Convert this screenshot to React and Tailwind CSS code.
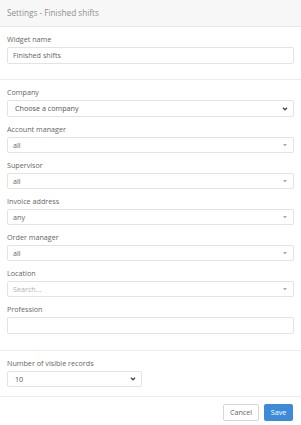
import React from "react";

const Chevron = () => (
  <svg width="6" height="4" viewBox="0 0 6 4" className="shrink-0">
    <path d="M1 0.8l2 2 2-2" fill="none" stroke="#444" strokeWidth="1.3" />
  </svg>
);

const Caret = () => (
  <svg width="4" height="3" viewBox="0 0 4 3" className="shrink-0">
    <path d="M0 0h4L2 2.5z" fill="#aaa" />
  </svg>
);

const Field = ({ label, children }) => (
  <div className="mb-[7px]">
    <div className="h-[13px] leading-[11px] text-[#666]">{label}</div>
    {children}
  </div>
);

const Dropdown = ({ value, muted }) => (
  <div className="h-[16px] border border-[#e3e3e3] rounded-[2px] bg-white flex items-center justify-between pl-[5px] pr-[6px]">
    <span className={muted ? "text-[#b0b0b0]" : "text-[#666]"}>{value}</span>
    <Caret />
  </div>
);

const App = () => {
  return (
    <div
      className="w-[301px] h-[425px] bg-white text-[7.2px] overflow-hidden"
      style={{ fontFamily: '"Open Sans", sans-serif' }}
    >
      <div className="h-[27px] bg-[#f7f7f7] border-b border-[#e8e8e8] flex items-center px-[7px] text-[8.2px] text-[#8f8f8f]">
        Settings - Finished shifts
      </div>

      <div className="px-[7px] pt-[6px] pb-[15px] border-b border-[#ececec]">
        <div className="h-[14px] leading-[12px] text-[#666]">Widget name</div>
        <div className="h-[17px] border border-[#e3e3e3] rounded-[2px] flex items-center px-[5px] text-[#666]">
          Finished shifts
        </div>
      </div>

      <div className="px-[7px] pt-[7px] pb-[9px] border-b border-[#ececec]">
        <Field label="Company">
          <div className="h-[17px] border border-[#e3e3e3] rounded-[2px] flex items-center justify-between pl-[7px] pr-[5px] text-[#555]">
            <span>Choose a company</span>
            <Chevron />
          </div>
        </Field>
        <Field label="Account manager">
          <Dropdown value="all" />
        </Field>
        <Field label="Supervisor">
          <Dropdown value="all" />
        </Field>
        <Field label="Invoice address">
          <Dropdown value="any" />
        </Field>
        <Field label="Order manager">
          <Dropdown value="all" />
        </Field>
        <Field label="Location">
          <Dropdown value="Search..." muted />
        </Field>
        <Field label="Profession">
          <div className="h-[17px] border border-[#e3e3e3] rounded-[2px]"></div>
        </Field>
      </div>

      <div className="px-[7px] pt-[6px] pb-[9px] border-b border-[#ececec]">
        <div className="h-[14px] leading-[12px] text-[#666]">Number of visible records</div>
        <div className="w-[135px] h-[16px] border border-[#e3e3e3] rounded-[2px] flex items-center justify-between pl-[7px] pr-[5px] text-[#555]">
          <span>10</span>
          <Chevron />
        </div>
      </div>

      <div className="flex justify-end gap-[5px] px-[8px] pt-[7px]">
        <button className="h-[17px] w-[36px] border border-[#d6d6d6] rounded-[2px] bg-white text-[#666]">
          Cancel
        </button>
        <button className="h-[17px] w-[29px] rounded-[2px] bg-[#3d8bd8] text-white">
          Save
        </button>
      </div>
    </div>
  );
};

export default App;
